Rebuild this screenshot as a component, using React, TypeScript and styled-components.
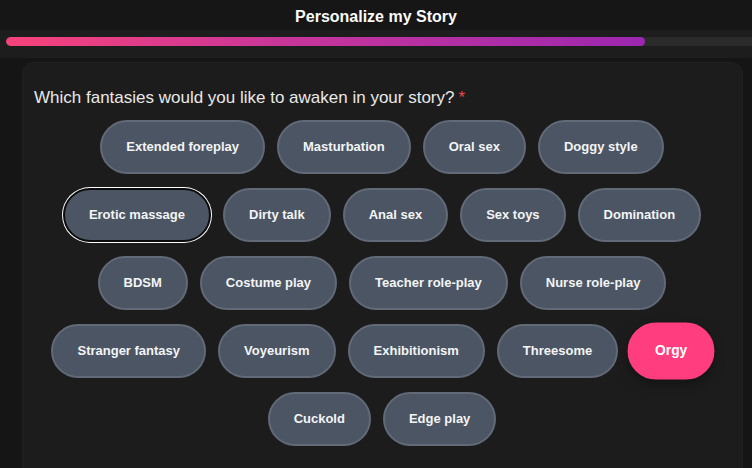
import { useState } from "react";
import styled, { createGlobalStyle, css } from "styled-components";

const GlobalStyle = createGlobalStyle`
  html, body {
    margin: 0;
    padding: 0;
    background: #151515;
    font-family: "Liberation Sans", Arial, sans-serif;
    overflow: hidden;
  }
`;

const Page = styled.div`
  width: 752px;
  height: 468px;
  display: flex;
  flex-direction: column;
  background: #151515;
`;

const TitleBar = styled.div`
  height: 30px;
  display: flex;
  align-items: center;
  justify-content: center;
  background: #161616;
  color: #fafafa;
  font-size: 16px;
  font-weight: 700;
  padding-top: 4px;
  box-sizing: border-box;
`;

const ProgressWrap = styled.div`
  background: #1d1d1d;
  padding: 7px 0 12px 6px;
`;

const Track = styled.div`
  height: 9px;
  border-radius: 5px 0 0 5px;
  background: #2b2b2b;
  overflow: hidden;
`;

const Fill = styled.div`
  height: 100%;
  border-radius: 5px;
  background: linear-gradient(90deg, #f7437a 0%, #c7359a 45%, #9c27b0 100%);
`;

const Card = styled.div`
  flex: 1;
  margin: 4px 9px 0 22px;
  background: #1c1c1c;
  border: 1px solid #202020;
  border-bottom: none;
  border-radius: 12px 12px 0 0;
  padding: 23px 12px 0 11px;
`;

const Question = styled.div`
  color: #e8e8e8;
  font-size: 17px;
  line-height: 24px;
  margin-bottom: 10px;
`;

const Star = styled.span`
  color: #e5484d;
  margin-left: 4px;
`;

const Chips = styled.div`
  display: flex;
  flex-wrap: wrap;
  justify-content: center;
  gap: 14px 12px;
`;

const Chip = styled.button<{ $selected?: boolean; $focused?: boolean }>`
  font-family: inherit;
  font-size: 13px;
  font-weight: 700;
  line-height: 16px;
  color: #f3f4f6;
  background: #4b5563;
  border: 2px solid #626a78;
  border-radius: 999px;
  padding: 17px 24px;
  cursor: pointer;
  white-space: nowrap;
  ${(p) =>
    p.$focused &&
    css`
      border-color: #0b0b0b;
      box-shadow: 0 0 0 1px #ffffff;
    `}
  ${(p) =>
    p.$selected &&
    css`
      background: #ff3d7f;
      border-color: #ff3d7f;
      color: #ffffff;
      transform: scale(1.06);
      box-shadow: 0 4px 10px rgba(0, 0, 0, 0.35);
    `}
`;

const fantasies = [
  "Extended foreplay",
  "Masturbation",
  "Oral sex",
  "Doggy style",
  "Erotic massage",
  "Dirty talk",
  "Anal sex",
  "Sex toys",
  "Domination",
  "BDSM",
  "Costume play",
  "Teacher role-play",
  "Nurse role-play",
  "Stranger fantasy",
  "Voyeurism",
  "Exhibitionism",
  "Threesome",
  "Orgy",
  "Cuckold",
  "Edge play",
];

export default function App() {
  const [picked, setPicked] = useState<string[]>(["Orgy"]);
  const progress = 639 / 746;

  const toggle = (name: string) => {
    setPicked((prev) => (prev.includes(name) ? prev.filter((n) => n !== name) : [...prev, name]));
  };

  return (
    <>
      <GlobalStyle />
      <Page>
        <TitleBar>Personalize my Story</TitleBar>
        <ProgressWrap>
          <Track>
            <Fill style={{ width: `${progress * 100}%` }} />
          </Track>
        </ProgressWrap>
        <Card>
          <Question>
            Which fantasies would you like to awaken in your story?<Star>*</Star>
          </Question>
          <Chips>
            {fantasies.map((f) => (
              <Chip
                key={f}
                $selected={picked.includes(f)}
                $focused={f === "Erotic massage"}
                onClick={() => toggle(f)}
              >
                {f}
              </Chip>
            ))}
          </Chips>
        </Card>
      </Page>
    </>
  );
}
